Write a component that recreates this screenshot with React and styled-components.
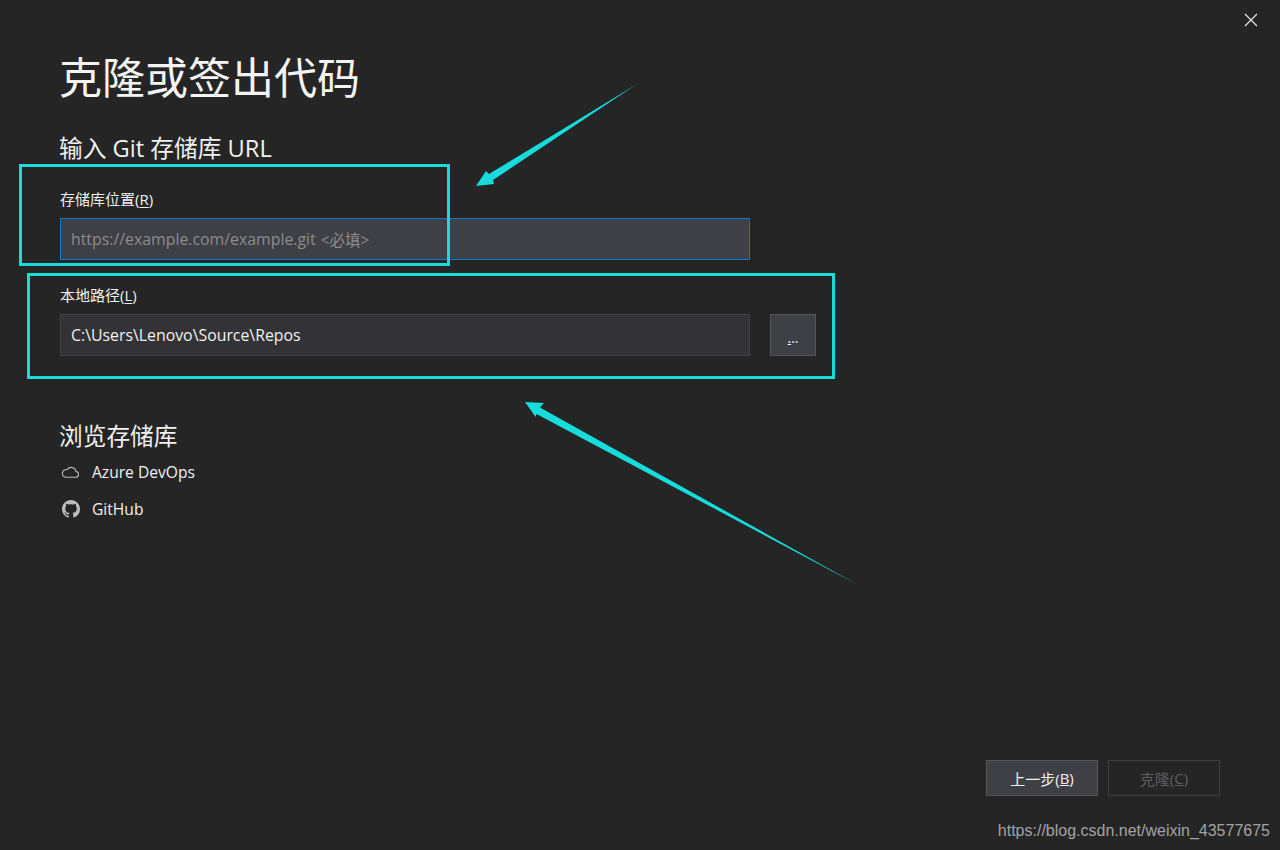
import React from 'react';
import styled, { createGlobalStyle } from 'styled-components';

const GlobalStyle = createGlobalStyle`
	html, body {
		margin: 0;
		padding: 0;
		background: #252526;
	}
`;

const uiFont = `"Open Sans", "Noto Sans CJK SC", sans-serif`;
const cyan = '#17dcdc';

const Page = styled.div`
	position: relative;
	box-sizing: border-box;
	width: 1280px;
	height: 850px;
	padding: 0 60px;
	overflow: hidden;
	display: flex;
	flex-direction: column;
	background: #252526;
	color: #f1f1f1;
	font-family: ${uiFont};
`;

const TopBar = styled.div`
	height: 40px;
	margin-right: -38px;
	display: flex;
	justify-content: flex-end;
	align-items: center;
	color: #e6e6e6;
`;

const Title = styled.h1`
	margin: 11px 0 0 -1px;
	font-size: 43px;
	line-height: 54px;
	font-weight: 400;
	color: #f4f4f4;
`;

const Heading = styled.h2`
	margin: ${({ $top }) => $top}px 0 0 -1px;
	font-size: 23.7px;
	line-height: 32px;
	font-weight: 400;
	color: #f1f1f1;
`;

const Label = styled.label`
	display: block;
	margin-top: ${({ $top }) => $top}px;
	font-size: 15px;
	line-height: 20px;
	color: #f1f1f1;
	u {
		text-underline-offset: 2px;
	}
`;

const FieldRow = styled.div`
	margin-top: ${({ $top }) => $top}px;
	display: flex;
	gap: 20px;
`;

const Field = styled.div`
	box-sizing: border-box;
	width: 690px;
	height: 42px;
	padding: 0 10px;
	display: flex;
	align-items: center;
	font-size: 15.85px;
	background: ${({ $focused }) => ($focused ? '#3f3f46' : '#333337')};
	border: 1px solid ${({ $focused }) => ($focused ? '#007acc' : '#434346')};
	color: ${({ $focused }) => ($focused ? '#8c8c8f' : '#f1f1f1')};
`;

const Hint = styled.span`
	margin-left: 5px;
	font-size: 15.5px;
`;

const BrowseButton = styled.div`
	box-sizing: border-box;
	width: 46px;
	height: 42px;
	padding-top: 13px;
	text-align: center;
	font-size: 14px;
	line-height: 20px;
	background: #3f3f46;
	border: 1px solid #555558;
	color: #f1f1f1;
`;

const RepoList = styled.ul`
	list-style: none;
	margin: 9px 0 0;
	padding: 0;
	display: flex;
	flex-direction: column;
	gap: 15px;
`;

const RepoItem = styled.li`
	height: 22px;
	display: flex;
	align-items: center;
	gap: 12px;
	font-size: 15.6px;
	color: #f1f1f1;
`;

const RepoIcon = styled.span`
	flex: none;
	width: 20px;
	display: flex;
	justify-content: center;
	padding-left: 1px;
	box-sizing: border-box;
	color: #bdbdbd;
`;

const Footer = styled.div`
	margin-top: auto;
	display: flex;
	flex-direction: column;
	align-items: flex-end;
`;

const Actions = styled.div`
	display: flex;
	gap: 10px;
`;

const ActionButton = styled.div`
	box-sizing: border-box;
	width: 112px;
	height: 36px;
	display: flex;
	justify-content: center;
	align-items: center;
	font-size: 15px;
	background: ${({ $disabled }) => ($disabled ? 'transparent' : '#3f3f46')};
	border: 1px solid ${({ $disabled }) => ($disabled ? '#3f3f46' : '#555558')};
	color: ${({ $disabled }) => ($disabled ? '#5e5e60' : '#f1f1f1')};
`;

const Watermark = styled.div`
	margin: 25px -50px 9px 0;
	font-family: "Liberation Sans", Arial, sans-serif;
	font-size: 16px;
	line-height: 20px;
	color: #a3a3a3;
`;

const Annotation = styled.div`
	position: absolute;
	left: ${({ $x }) => $x}px;
	top: ${({ $y }) => $y}px;
	width: ${({ $w }) => $w}px;
	height: ${({ $h }) => $h}px;
	box-sizing: border-box;
	border: 3px solid ${cyan};
	pointer-events: none;
`;

const ArrowLayer = styled.svg`
	position: absolute;
	left: 0;
	top: 0;
	pointer-events: none;
`;

const CloseIcon = () => (
	<svg width="14" height="14" viewBox="0 0 14 14" fill="none" stroke="currentColor" strokeWidth="1.2">
		<path d="M1 1l12 12M13 1L1 13" />
	</svg>
);

const CloudIcon = () => (
	<svg width="19" height="14" viewBox="0 0 20 14" fill="none" stroke="currentColor" strokeWidth="1.1">
		<path d="M5 12.5h10.2a3 3 0 0 0 .5-6A5 5 0 0 0 6.6 4.4 4.2 4.2 0 0 0 4.6 4.6 4 4 0 0 0 1.5 8.6 4 4 0 0 0 5 12.5z" />
	</svg>
);

const GitHubIcon = () => (
	<svg width="18" height="18" viewBox="0 0 16 16" fill="currentColor">
		<path d="M8 0C3.58 0 0 3.58 0 8c0 3.54 2.29 6.53 5.47 7.59.4.07.55-.17.55-.38 0-.19-.01-.82-.01-1.49-2.01.37-2.53-.49-2.69-.94-.09-.23-.48-.94-.82-1.13-.28-.15-.68-.52-.01-.53.63-.01 1.08.58 1.23.82.72 1.21 1.87.87 2.33.66.07-.52.28-.87.51-1.07-1.78-.2-3.64-.89-3.64-3.95 0-.87.31-1.59.82-2.15-.08-.2-.36-1.02.08-2.12 0 0 .67-.21 2.2.82.64-.18 1.32-.27 2-.27s1.36.09 2 .27c1.53-1.04 2.2-.82 2.2-.82.44 1.1.16 1.92.08 2.12.51.56.82 1.27.82 2.15 0 3.07-1.87 3.75-3.65 3.95.29.25.54.73.54 1.48 0 1.07-.01 1.93-.01 2.2 0 .21.15.46.55.38A8.01 8.01 0 0 0 16 8c0-4.42-3.58-8-8-8z" />
	</svg>
);

const App = () => (
	<Page>
		<GlobalStyle />
		<TopBar><CloseIcon /></TopBar>
		<Title>克隆或签出代码</Title>
		<Heading $top={27}>输入 Git 存储库 URL</Heading>
		<Label $top={25}>存储库位置(<u>R</u>)</Label>
		<FieldRow $top={9}>
			<Field $focused>https://example.com/example.git<Hint>&lt;必填&gt;</Hint></Field>
		</FieldRow>
		<Label $top={25}>本地路径(<u>L</u>)</Label>
		<FieldRow $top={9}>
			<Field>C:\Users\Lenovo\Source\Repos</Field>
			<BrowseButton><u>.</u>..</BrowseButton>
		</FieldRow>
		<Heading $top={64}>浏览存储库</Heading>
		<RepoList>
			<RepoItem><RepoIcon><CloudIcon /></RepoIcon>Azure DevOps</RepoItem>
			<RepoItem><RepoIcon><GitHubIcon /></RepoIcon>GitHub</RepoItem>
		</RepoList>
		<Footer>
			<Actions>
				<ActionButton>上一步(<u>B</u>)</ActionButton>
				<ActionButton $disabled>克隆(<u>C</u>)</ActionButton>
			</Actions>
			<Watermark>https://blog.csdn.net/weixin_43577675</Watermark>
		</Footer>
		<Annotation $x={19} $y={164} $w={431} $h={102} />
		<Annotation $x={27} $y={273} $w={808} $h={106} />
		<ArrowLayer width="1280" height="850" viewBox="0 0 1280 850">
			<polygon fill={cyan} points="476,186 486,171 489,174 637,84 493,180 494,184" />
			<polygon fill={cyan} points="525,402 544,403 540,407.5 858,585 536.5,414 535.7,417" />
		</ArrowLayer>
	</Page>
);

export default App;
